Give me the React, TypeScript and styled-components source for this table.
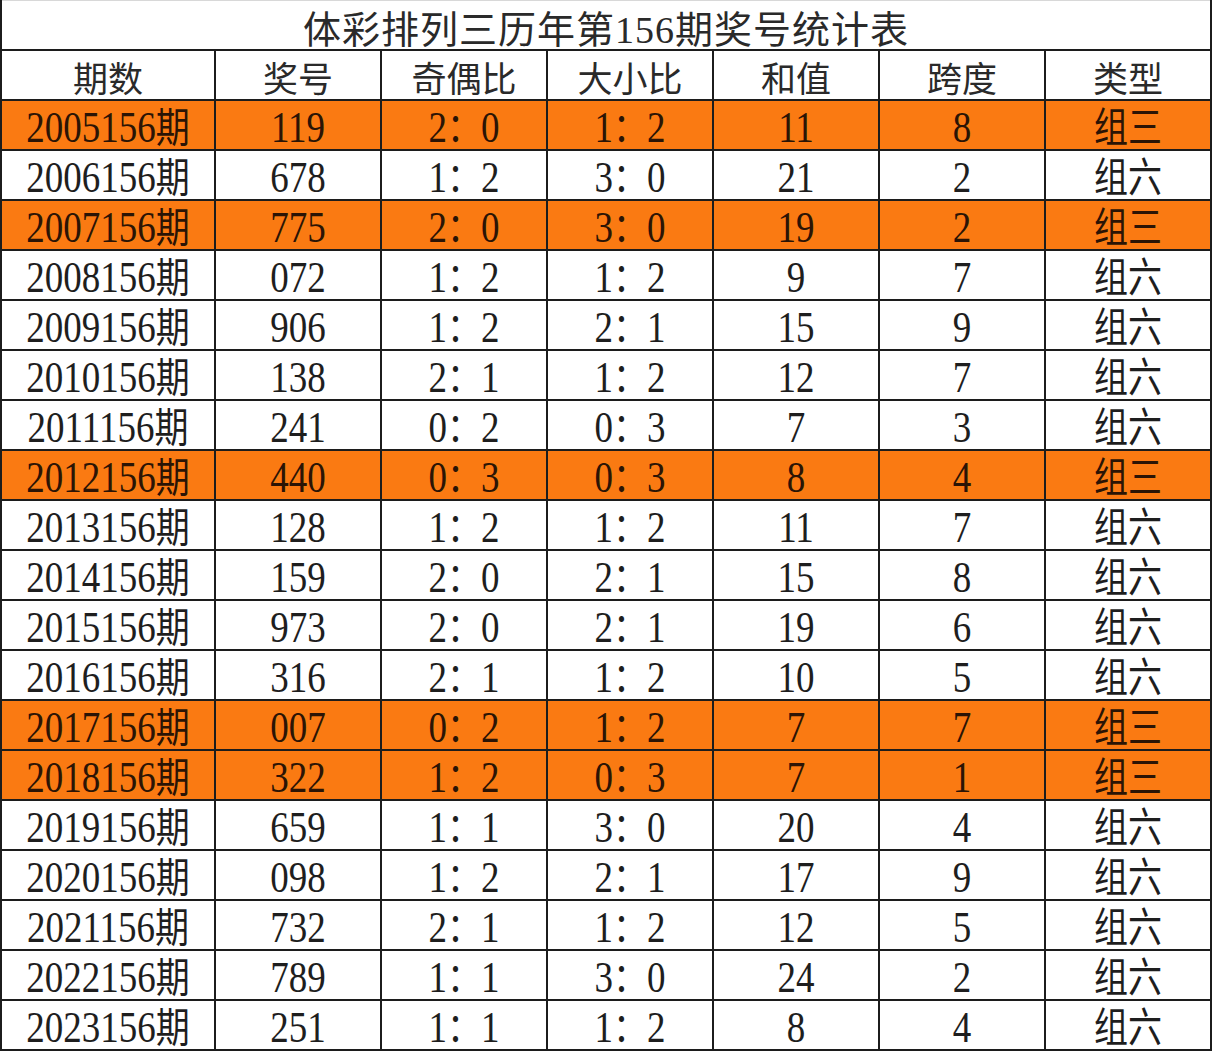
import React from 'react';
import styled, { createGlobalStyle } from 'styled-components';

const GlobalStyle = createGlobalStyle`
  html, body {
    margin: 0;
    padding: 0;
    background: #ffffff;
  }
`;

const Sheet = styled.div`
  display: grid;
  grid-template-columns: 212px repeat(6, 164px);
  grid-auto-rows: 48px;
  grid-template-rows: 49px;
  gap: 2px;
  padding: 0 2px 2px 2px;
  width: 1212px;
  box-sizing: border-box;
  background: #1c1c1c;
  font-family: "Liberation Serif", "Noto Sans CJK SC", serif;
`;

const Title = styled.div`
  grid-column: 1 / -1;
  background: #ffffff;
  display: flex;
  align-items: center;
  justify-content: center;
  font-size: 38px;
  color: #2a2a2a;
  letter-spacing: 1px;
  padding-top: 4px;
  box-shadow: inset 0 1px 0 #d8d8d8;
`;

const HeadCell = styled.div`
  background: #ffffff;
  display: flex;
  align-items: center;
  justify-content: center;
  font-family: "Noto Sans CJK SC", sans-serif;
  font-size: 35px;
  color: #2a2a2a;
  padding-top: 2px;
`;

const Cell = styled.div<{ $hot: boolean }>`
  background: ${(p) => (p.$hot ? '#fa7a12' : '#ffffff')};
  color: ${(p) => (p.$hot ? '#2b1405' : '#1e1e1e')};
  display: flex;
  align-items: center;
  justify-content: center;
  font-size: 37px;
`;

const Stretch = styled.span`
  display: inline-block;
  transform: scaleY(1.2);
  white-space: nowrap;
  line-height: 1;
  padding-top: 2px;
`;

const Cjk = styled.span`
  font-family: "Noto Sans CJK SC", sans-serif;
  font-size: 34px;
`;

const headers = ['期数', '奖号', '奇偶比', '大小比', '和值', '跨度', '类型'];

type Row = [string, string, string, string, string, string, string];

const rows: Row[] = [
  ['2005', '119', '2：0', '1：2', '11', '8', '组三'],
  ['2006', '678', '1：2', '3：0', '21', '2', '组六'],
  ['2007', '775', '2：0', '3：0', '19', '2', '组三'],
  ['2008', '072', '1：2', '1：2', '9', '7', '组六'],
  ['2009', '906', '1：2', '2：1', '15', '9', '组六'],
  ['2010', '138', '2：1', '1：2', '12', '7', '组六'],
  ['2011', '241', '0：2', '0：3', '7', '3', '组六'],
  ['2012', '440', '0：3', '0：3', '8', '4', '组三'],
  ['2013', '128', '1：2', '1：2', '11', '7', '组六'],
  ['2014', '159', '2：0', '2：1', '15', '8', '组六'],
  ['2015', '973', '2：0', '2：1', '19', '6', '组六'],
  ['2016', '316', '2：1', '1：2', '10', '5', '组六'],
  ['2017', '007', '0：2', '1：2', '7', '7', '组三'],
  ['2018', '322', '1：2', '0：3', '7', '1', '组三'],
  ['2019', '659', '1：1', '3：0', '20', '4', '组六'],
  ['2020', '098', '1：2', '2：1', '17', '9', '组六'],
  ['2021', '732', '2：1', '1：2', '12', '5', '组六'],
  ['2022', '789', '1：1', '3：0', '24', '2', '组六'],
  ['2023', '251', '1：1', '1：2', '8', '4', '组六'],
];

function renderRatio(v: string) {
  const [a, b] = v.split('：');
  return (
    <>
      {a}
      <Cjk>：</Cjk>
      {b}
    </>
  );
}

export default function App() {
  return (
    <>
      <GlobalStyle />
      <Sheet>
        <Title>体彩排列三历年第156期奖号统计表</Title>
        {headers.map((h) => (
          <HeadCell key={h}>{h}</HeadCell>
        ))}
        {rows.map((r) => {
          const hot = r[6] === '组三';
          return (
            <React.Fragment key={r[0]}>
              <Cell $hot={hot}>
                <Stretch>
                  {r[0]}156<Cjk>期</Cjk>
                </Stretch>
              </Cell>
              <Cell $hot={hot}>
                <Stretch>{r[1]}</Stretch>
              </Cell>
              <Cell $hot={hot}>
                <Stretch>{renderRatio(r[2])}</Stretch>
              </Cell>
              <Cell $hot={hot}>
                <Stretch>{renderRatio(r[3])}</Stretch>
              </Cell>
              <Cell $hot={hot}>
                <Stretch>{r[4]}</Stretch>
              </Cell>
              <Cell $hot={hot}>
                <Stretch>{r[5]}</Stretch>
              </Cell>
              <Cell $hot={hot}>
                <Stretch>
                  <Cjk>{r[6]}</Cjk>
                </Stretch>
              </Cell>
            </React.Fragment>
          );
        })}
      </Sheet>
    </>
  );
}
